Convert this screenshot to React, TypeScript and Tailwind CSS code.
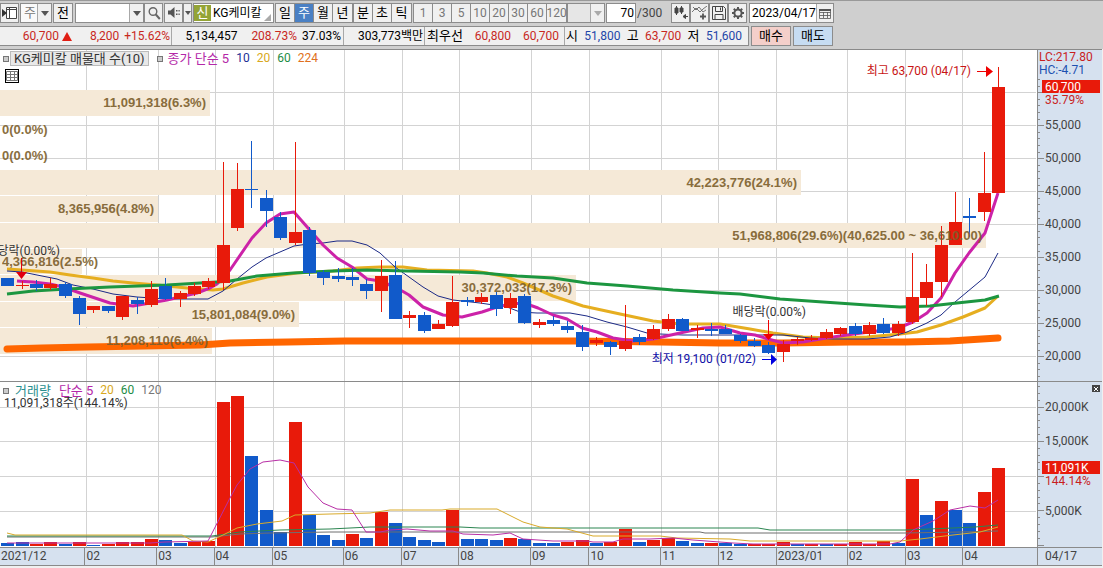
import React, { FC, ReactNode } from "react";

type Point = [number, number];
// high, body top, body bottom, low, rising
type Candle = [number, number, number, number, boolean];

const UP = "#e81a0a";
const DOWN = "#115aca";
const U = true;
const D = false;

const candles: Candle[] = [
  [278, 278, 286, 286, D], [281, 285, 286, 289, U], [280, 284, 288, 291, D], [278, 284, 288, 290, U],
  [282, 284, 296, 298, D], [296, 298, 314, 325, D], [306, 306, 310, 313, U], [306, 306, 311, 313, D],
  [296, 296, 317, 320, U], [297, 300, 304, 314, D], [281, 289, 305, 307, U], [278, 286, 299, 300, D],
  [291, 293, 299, 307, U], [283, 286, 294, 296, U], [278, 281, 287, 289, U], [162, 245, 283, 290, U],
  [163, 189, 228, 231, U], [141, 189, 190, 208, D], [190, 198, 211, 227, D], [212, 217, 238, 240, D],
  [142, 232, 243, 245, U], [227, 230, 273, 276, D], [270, 272, 278, 285, D], [268, 276, 279, 282, D],
  [268, 277, 280, 286, D], [279, 284, 291, 299, D], [260, 276, 291, 312, U], [261, 275, 319, 319, D],
  [311, 315, 318, 328, U], [312, 315, 331, 333, D], [320, 324, 329, 329, U], [276, 302, 326, 327, U],
  [297, 300, 302, 306, D], [293, 297, 302, 304, U], [292, 295, 309, 316, D], [293, 298, 308, 314, U],
  [294, 296, 323, 324, D], [319, 322, 325, 328, U], [316, 320, 324, 326, D], [321, 326, 330, 333, D],
  [325, 332, 347, 351, D], [337, 340, 343, 346, U], [341, 342, 347, 355, D], [305, 341, 349, 351, U],
  [334, 337, 342, 345, D], [325, 329, 339, 340, U], [314, 319, 329, 331, U], [318, 319, 331, 331, D],
  [325, 328, 330, 338, U], [323, 329, 331, 336, D], [325, 329, 334, 334, D], [334, 335, 341, 343, D],
  [338, 341, 346, 347, D], [342, 345, 353, 354, D], [340, 344, 352, 362, U], [337, 339, 341, 345, U],
  [335, 338, 340, 341, U], [329, 332, 338, 339, U], [327, 328, 334, 336, U], [323, 326, 334, 336, D],
  [322, 325, 334, 336, U], [318, 324, 333, 334, D], [321, 324, 333, 336, U], [253, 297, 322, 324, U],
  [264, 282, 298, 306, U], [226, 245, 282, 297, U], [192, 222, 245, 245, U], [198, 216, 218, 237, D],
  [152, 193, 212, 221, U], [67, 87, 193, 193, U],
];

const volumes: [number, boolean][] = [
  [543, D], [542, D], [544, U], [542, U], [544, D], [542, U], [545, D], [544, U], [542, U], [542, U],
  [539, U], [540, D], [543, D], [542, U], [541, U], [402, U], [396, U], [456, D], [510, D], [532, D],
  [422, U], [515, D], [535, D], [540, D], [534, U], [538, D], [512, U], [523, D], [537, D], [540, D],
  [542, D], [510, U], [539, D], [539, D], [540, D], [538, U], [539, D], [543, D], [543, D], [542, U],
  [540, U], [543, D], [542, U], [529, U], [542, D], [540, U], [538, U], [541, D], [543, D], [543, U],
  [543, D], [544, D], [544, U], [544, U], [542, U], [544, D], [544, U], [544, D], [544, U], [542, U],
  [544, U], [541, U], [543, D], [479, U], [515, D], [501, U], [510, D], [523, D], [492, U], [468, U],
];

const ma5: Point[] = [
  [17, 281], [33, 282], [50, 284], [63, 287], [80, 293], [95, 298], [110, 303], [133, 306], [150, 303],
  [167, 300], [180, 297], [197, 293], [210, 288], [217, 284], [230, 270], [252, 238], [266, 223],
  [280, 214], [294, 212], [308, 228], [323, 245], [337, 258], [352, 267], [367, 279], [380, 281],
  [397, 288], [409, 295], [423, 307], [443, 315], [462, 317], [482, 312], [497, 307], [510, 304],
  [524, 303], [538, 308], [553, 315], [567, 319], [582, 328], [597, 332], [613, 338], [633, 341],
  [653, 339], [680, 333], [703, 328], [720, 327], [740, 333], [755, 335], [768, 339], [783, 343],
  [803, 342], [826, 338], [854, 334], [877, 331], [898, 328], [913, 322], [927, 313], [941, 298],
  [955, 273], [969, 253], [985, 233], [998, 193],
];
const ma10: Point[] = [
  [7, 271], [22, 272], [37, 275], [57, 279], [73, 285], [93, 289], [113, 294], [137, 297], [167, 299],
  [208, 299], [223, 291], [237, 279], [252, 267], [266, 258], [280, 252], [294, 246], [308, 244],
  [323, 243], [337, 241], [352, 241], [367, 245], [380, 253], [395, 267], [409, 277], [423, 287],
  [438, 296], [453, 300], [480, 303], [507, 307], [520, 312], [537, 313], [570, 313], [587, 316],
  [607, 322], [627, 327], [647, 333], [660, 334], [683, 335], [783, 335], [810, 338], [833, 339],
  [867, 339], [890, 337], [907, 332], [927, 323], [941, 315], [955, 302], [985, 277], [998, 253],
];
const ma20: Point[] = [
  [7, 269], [22, 270], [50, 272], [70, 275], [93, 278], [113, 281], [133, 283], [157, 285], [187, 288],
  [213, 290], [223, 289], [243, 283], [267, 277], [297, 273], [333, 271], [357, 268], [380, 267],
  [403, 267], [427, 270], [473, 271], [487, 273], [507, 277], [523, 283], [553, 296], [583, 306],
  [620, 314], [653, 321], [680, 324], [720, 324], [750, 329], [773, 333], [803, 337], [833, 338],
  [867, 337], [900, 334], [917, 332], [941, 325], [963, 317], [985, 308], [998, 296],
];
const ma60: Point[] = [
  [7, 294], [33, 291], [67, 289], [110, 287], [167, 285], [217, 282], [230, 281], [257, 276], [293, 273],
  [333, 271], [367, 270], [407, 271], [460, 272], [483, 273], [517, 276], [553, 278], [587, 283],
  [627, 286], [673, 290], [720, 293], [740, 294], [780, 299], [823, 302], [867, 305], [900, 307],
  [930, 306], [957, 303], [985, 300], [999, 296],
];
const ma224: Point[] = [
  [7, 349], [42, 348], [88, 347], [200, 345], [230, 343], [288, 342], [345, 341], [575, 341], [660, 342],
  [720, 343], [783, 343], [850, 342], [905, 342], [950, 341], [998, 338],
];

const vol5: Point[] = [
  [7, 543], [150, 543], [165, 542], [208, 541], [230, 498], [237, 485], [250, 469], [263, 462], [280, 460],
  [294, 463], [308, 487], [323, 503], [337, 509], [352, 510], [366, 532], [380, 532], [390, 530],
  [407, 529], [430, 531], [453, 531], [463, 534], [493, 535], [510, 533], [523, 539], [553, 541],
  [587, 541], [593, 542], [613, 542], [623, 539], [650, 539], [673, 538], [693, 540], [733, 543],
  [753, 544], [890, 544], [900, 542], [913, 530], [933, 521], [950, 510], [970, 506], [985, 508], [998, 500],
];
const vol20: Point[] = [
  [7, 533], [15, 535], [182, 535], [193, 541], [208, 542], [223, 535], [237, 528], [257, 524], [282, 521],
  [295, 515], [330, 514], [370, 513], [390, 510], [442, 510], [450, 509], [497, 509], [523, 522],
  [540, 527], [567, 529], [593, 536], [660, 536], [677, 538], [730, 539], [750, 541], [900, 541],
  [920, 539], [953, 535], [980, 532], [998, 527],
];
const vol60: Point[] = [
  [7, 536], [212, 536], [240, 532], [280, 530], [330, 529], [370, 527], [460, 527], [480, 528], [758, 528],
  [770, 530], [905, 530], [930, 529], [975, 527], [998, 525],
];
const vol120: Point[] = [
  [7, 537], [212, 537], [240, 534], [270, 533], [330, 532], [700, 532], [705, 533], [905, 533], [960, 532], [998, 531],
];

// price bands: right edge, top, bottom
const bands = [
  [210, 90, 116], [801, 170, 195], [158, 196, 222], [986, 223, 248], [82, 249, 274],
  [576, 275, 301], [299, 302, 327], [212, 328, 354],
];

const bandLabels: { x: number; y: number; text: string; left?: boolean }[] = [
  { x: 206, y: 107, text: "11,091,318(6.3%)" },
  { x: 2, y: 134, text: "0(0.0%)", left: true },
  { x: 2, y: 160, text: "0(0.0%)", left: true },
  { x: 797, y: 187, text: "42,223,776(24.1%)" },
  { x: 154, y: 213, text: "8,365,956(4.8%)" },
  { x: 982, y: 240, text: "51,968,806(29.6%)(40,625.00 ~ 36,610.00)" },
  { x: 2, y: 266, text: "4,366,816(2.5%)", left: true },
  { x: 572, y: 292, text: "30,372,033(17.3%)" },
  { x: 295, y: 319, text: "15,801,084(9.0%)" },
  { x: 208, y: 345, text: "11,208,110(6.4%)" },
];

const months = [
  { label: "2021/12", start: 0 }, { label: "02", start: 86 }, { label: "03", start: 158 },
  { label: "04", start: 215 }, { label: "05", start: 273 }, { label: "06", start: 344 },
  { label: "07", start: 402 }, { label: "08", start: 459 }, { label: "09", start: 531 },
  { label: "10", start: 589 }, { label: "11", start: 661 }, { label: "12", start: 718 },
  { label: "2023/01", start: 776 }, { label: "02", start: 847 }, { label: "03", start: 905 },
  { label: "04", start: 962 },
];

const PLOT_WIDTH = 1037;
const priceGrid = [92, 125, 158, 191, 224, 257, 290, 323, 356];
const volumeGrid = [407, 441, 476, 511];

const centerX = (i: number) => Math.round(7.3 + i * 14.36);
const toPoints = (points: Point[]) => points.map((p) => p.join(",")).join(" ");

const Grid: FC<{ rows: number[]; top: number; bottom: number }> = ({ rows, top, bottom }) => (
  <g stroke="#d3d3d3" shapeRendering="crispEdges">
    {months.slice(1).map((m) => (
      <line key={m.start} x1={m.start + 0.5} x2={m.start + 0.5} y1={top} y2={bottom} />
    ))}
    {rows.map((y) => (
      <line key={y} x1={0} x2={PLOT_WIDTH - 1} y1={y + 0.5} y2={y + 0.5} />
    ))}
  </g>
);

const Line: FC<{ points: Point[]; color: string; width?: number }> = ({ points, color, width = 1 }) => (
  <polyline
    points={toPoints(points)}
    fill="none"
    stroke={color}
    strokeWidth={width}
    strokeLinejoin="round"
    strokeLinecap={width > 4 ? "round" : "butt"}
  />
);

const PricePlot = () => (
  <svg viewBox="0 50 1037 331" className="block h-auto w-full bg-white" role="img" aria-label="KG케미칼 주봉">
    <Grid rows={priceGrid} top={50} bottom={381} />
    {bands.map(([right, top, bottom]) => (
      <rect key={top} x={0} y={top} width={right} height={bottom - top} fill="#f5e9d7" />
    ))}
    <Line points={ma224} color="#ff6600" width={7} />
    <Line points={ma20} color="#e6ae20" width={3} />
    <Line points={ma10} color="#1c2a86" />
    <Line points={ma5} color="#cc22a8" width={3} />
    <Line points={ma60} color="#1c9640" width={3} />
    <g shapeRendering="crispEdges">
      {candles.map(([high, top, bottom, low, up], i) => {
        const x = centerX(i);
        return (
          <g key={i} fill={up ? UP : DOWN}>
            <rect x={x} y={high} width={1} height={low - high} />
            <rect x={x - 6} y={top} width={13} height={bottom - top} />
          </g>
        );
      })}
    </g>
    <g fill="#7d5f2c" fontSize={13} fontWeight={700} className="[font-family:'Liberation_Sans',sans-serif]">
      {bandLabels.map((l) => (
        <text key={l.y} x={l.x} y={l.y} textAnchor={l.left ? "start" : "end"} opacity={0.9}>
          {l.text}
        </text>
      ))}
    </g>
    <g fontSize={12}>
      <text x={971} y={75} textAnchor="end" fill="#c81414">최고 63,700 (04/17)</text>
      <path d="M977 71h9v-5l7 5.500-7 5.500v-5h-9z" fill="#f00000" />
      <text x={756} y={363} textAnchor="end" fill="#1010a8">최저 19,100 (01/02)</text>
      <path d="M762 359h9v-5l6 5.500-6 5.500v-5h-9z" fill="#0000e0" />
      <text x={806} y={316} textAnchor="end" fill="#333">배당락(0.00%)</text>
      <path d="M768 320h1v14h5l-5.500 6-5.500-6h5z" fill="#f00000" />
      <text x={60} y={255} textAnchor="end" fill="#333">당락(0.00%)</text>
      <path d="M21 258h1v14h5l-5.500 7-5.500-7h5z" fill="#e00010" />
    </g>
  </svg>
);

const VolumePlot = () => (
  <svg viewBox="0 382 1037 165" className="block h-auto w-full bg-white" role="img" aria-label="거래량">
    <Grid rows={volumeGrid} top={382} bottom={547} />
    <g shapeRendering="crispEdges">
      {volumes.map(([top, up], i) => (
        <rect key={i} x={centerX(i) - 6} y={top} width={13} height={546 - top} fill={up ? UP : DOWN} />
      ))}
    </g>
    <Line points={vol120} color="#6f6f6f" />
    <Line points={vol60} color="#2b8550" />
    <Line points={vol20} color="#d9aa2a" />
    <Line points={vol5} color="#b82fa6" />
  </svg>
);

const PriceAxis = () => (
  <svg viewBox="0 50 64 331" className="block h-full w-full" fontSize={12} fill="#444">
    <g stroke="#8a8a8a" shapeRendering="crispEdges">
      {Array.from({ length: 46 }, (_, i) => {
        const y = Math.round(376 - i * 6.6) + 0.5;
        return <line key={i} x1={0} x2={(i + 2) % 5 === 0 ? 6 : 2} y1={y} y2={y} />;
      })}
    </g>
    {priceGrid.slice(1).map((y, i) => (
      <text key={y} x={7} y={y + 4}>{`${55 - i * 5},000`}</text>
    ))}
    <text x={1} y={61} fill="#c81e1e">LC:217.80</text>
    <text x={1} y={74} fill="#1c50b0">HC:-4.71</text>
    <text x={7} y={104} fill="#c81e1e">35.79%</text>
    <rect x={4} y={80} width={58} height={13} fill={UP} />
    <text x={7} y={91} fill="#fff">60,700</text>
  </svg>
);

const VolumeAxis = () => (
  <svg viewBox="0 382 64 165" className="block h-full w-full" fontSize={12} fill="#444">
    <g stroke="#8a8a8a" shapeRendering="crispEdges">
      {Array.from({ length: 24 }, (_, i) => {
        const y = Math.round(545 - i * 6.92) + 0.5;
        return <line key={i} x1={0} x2={i % 5 === 0 ? 6 : 2} y1={y} y2={y} />;
      })}
    </g>
    <text x={7} y={411}>20,000K</text>
    <text x={7} y={445}>15,000K</text>
    <text x={7} y={515}>5,000K</text>
    <text x={7} y={485} fill="#c81e1e">144.14%</text>
    <rect x={4} y={461} width={58} height={13} fill={UP} />
    <text x={7} y={472} fill="#fff">11,091K</text>
  </svg>
);

const DateAxis = () => (
  <div className="flex h-[17px] leading-4 text-[#444]">
    {months.map((m, i) => {
      const end = months[i + 1]?.start ?? PLOT_WIDTH;
      return (
        <div
          key={m.start}
          className={i === 0 ? "min-w-0 basis-0 pl-px" : "min-w-0 basis-0 border-l border-[#8a8a8a] pl-px"}
          style={{ flexGrow: end - m.start }}
        >
          {m.label}
        </div>
      );
    })}
  </div>
);

const Arrow: FC<{ muted?: boolean }> = ({ muted }) => (
  <svg viewBox="0 0 8 5" className="h-[5px] w-2" fill={muted ? "#aaa" : "#555"}>
    <path d="M0 0h8l-4 5z" />
  </svg>
);

interface DropDownProps {
  label: string;
  value: string;
  className: string;
  muted?: boolean;
}

const DropDown: FC<DropDownProps> = ({ label, value, className, muted }) => (
  <div className={`relative flex border border-[#8c8c8c] ${className}`}>
    <select
      aria-label={label}
      disabled={muted}
      className="w-full appearance-none pl-[3px] text-[13px] leading-4 text-[#777] outline-none"
    >
      <option>{value}</option>
    </select>
    <span className="pointer-events-none absolute inset-y-0 right-0 flex w-[14px] items-center justify-center border-l border-[#a8a8a8] bg-[#f0f0f0]">
      <Arrow muted={muted} />
    </span>
  </div>
);

const IconButton: FC<{ label: string; className?: string; children: ReactNode }> = ({ label, className, children }) => (
  <button
    type="button"
    aria-label={label}
    className={`flex items-center justify-center border border-[#8c8c8c] bg-[#f0f0f0] ${className ?? "w-[19px]"}`}
  >
    {children}
  </button>
);

const ButtonGroup: FC<{ items: string[]; active?: string; muted?: boolean }> = ({ items, active, muted }) => (
  <div className="flex divide-x divide-[#8c8c8c] border border-[#8c8c8c]">
    {items.map((item) => (
      <button
        key={item}
        type="button"
        className={`flex w-[19px] items-center justify-center whitespace-nowrap ${
          item === active
            ? "bg-[#4a80c4] text-[13px] text-white"
            : muted
              ? "bg-[#f0f0f0] text-[#777]"
              : "bg-[#f0f0f0] text-[13px] text-black"
        }`}
      >
        {item}
      </button>
    ))}
  </div>
);

const Toolbar = () => (
  <div className="flex h-5 items-stretch">
    <IconButton label="패널 열기" className="w-[19px]">
      <svg viewBox="0 0 16 14" className="h-[14px] w-4">
        <path d="M4.500 1.500h10v11h-10zM7.500 1.500v11M4.500 3.500h10" fill="#fff" stroke="#444" />
        <path d="M0 3l5 4-5 4z" fill="#333" />
      </svg>
    </IconButton>
    <DropDown label="종목 구분" value="주" className="ml-px w-8 bg-[#fafafa]" />
    <button type="button" className="ml-px w-5 border border-[#8c8c8c] bg-[#f0f0f0] text-[13px] leading-4">전</button>
    <DropDown label="종목 검색" value="" className="ml-[2px] w-[69px] bg-white" />
    <IconButton label="검색">
      <svg viewBox="0 0 14 14" className="h-[14px] w-[14px]" fill="none" stroke="#666">
        <circle cx="6" cy="5.500" r="3.800" strokeWidth="1.400" />
        <path d="M8.800 8.500l4 4.500" strokeWidth="2" />
      </svg>
    </IconButton>
    <IconButton label="소리" className="ml-px w-[19px]">
      <svg viewBox="0 0 14 12" className="h-3 w-[14px]" fill="#555">
        <path d="M1 3.500h2.500L7.500 0v11l-4-3.500H1z" />
        <path d="M9 3h1.500v1.500H9zM9 6.500h1.500V8H9zM11.500 3h1.200v1.500h-1.200zM11.500 6.500h1.200V8h-1.200z" />
      </svg>
    </IconButton>
    <IconButton label="소리 메뉴" className="w-[9px]">
      <svg viewBox="0 0 6 4" className="h-1 w-[6px]" fill="#555"><path d="M0 0h6L3 4z" /></svg>
    </IconButton>
    <div className="relative ml-px flex w-[81px] items-center border border-[#8c8c8c] bg-white">
      <span className="flex h-4 w-[17px] items-center justify-center bg-[#94a436] text-[13px] text-white">신</span>
      <input aria-label="종목명" defaultValue="KG케미칼" className="w-[60px] pl-[2px] outline-none" />
      <svg viewBox="0 0 7 7" className="absolute right-[2px] bottom-px h-[7px] w-[7px]" fill="#aaa">
        <path d="M7 0v7H0z" />
      </svg>
    </div>
    <div className="ml-px flex">
      <ButtonGroup items={["일", "주", "월", "년"]} active="주" />
      <ButtonGroup items={["분", "초", "틱"]} />
    </div>
    <div className="ml-px flex">
      <ButtonGroup items={["1", "3", "5", "10", "20", "30", "60", "120"]} muted />
    </div>
    <DropDown label="틱 단위" value="" className="w-[38px] bg-[#e6e6e6]" muted />
    <label className="ml-px flex items-center">
      <input
        aria-label="표시 개수"
        defaultValue="70"
        className="h-full w-[30px] border border-[#8c8c8c] bg-white pr-px text-right outline-none"
      />
      <span className="w-[35px] pl-px text-[#444]">/300</span>
    </label>
    <IconButton label="차트 추가">
      <svg viewBox="0 0 16 14" className="h-[14px] w-4" fill="#444" stroke="#444">
        <path d="M3.500 0v9M8.500 0v8" />
        <path d="M2 2h3v5H2zM7 2h3v4H7z" />
        <path d="M15 10.500h-3.500M12.500 8.500l-2.500 2 2.500 2z" />
      </svg>
    </IconButton>
    <IconButton label="지표 추가">
      <svg viewBox="0 0 16 14" className="h-[14px] w-4" fill="none" stroke="#555">
        <path d="M0 6l4-4 4 4 3-3 4-3M1 1l3 3 3-3 4 5 3-2" strokeWidth=".8" />
        <path d="M8 10.500h6M11 7.500v6" strokeWidth="1.800" />
      </svg>
    </IconButton>
    <IconButton label="저장">
      <svg viewBox="0 0 14 14" className="h-[14px] w-[14px]" fill="none" stroke="#444">
        <path d="M.5.5h11l2 2v11H.5zM3.500.5v5h7v-5M3 13.500v-5h8v5M8.500 1.500v3" />
      </svg>
    </IconButton>
    <IconButton label="설정">
      <svg viewBox="0 0 14 14" className="h-[14px] w-[14px]" fill="none" stroke="#555">
        <circle cx="7" cy="7" r="3.600" strokeWidth="2" />
        <path
          d="M7 1v2M7 11v2M1 7h2M11 7h2M2.800 2.800l1.400 1.400M9.800 9.800l1.400 1.400M11.200 2.800L9.800 4.200M4.200 9.800l-1.400 1.400"
          strokeWidth="2"
        />
      </svg>
    </IconButton>
    <div className="ml-[2px] flex w-[85px] border border-[#8c8c8c] bg-white">
      <input aria-label="기준일" defaultValue="2023/04/17" className="w-[66px] pl-[2px] outline-none" />
      <button
        type="button"
        aria-label="달력"
        className="flex flex-1 items-center justify-center border-l border-[#a8a8a8] bg-[#f0f0f0]"
      >
        <svg viewBox="0 0 12 11" className="h-[11px] w-3" fill="none" stroke="#555">
          <path d="M.5 1.500h11v9H.5zM.5 4.500h11M.5 7.500h11M4.500 4v6M8.500 4v6" strokeWidth=".8" />
          <path d="M0 2h12" strokeWidth="2" />
        </svg>
      </button>
    </div>
  </div>
);

const RED = "text-[#c8281e]";
const BLUE = "text-[#1e46a8]";

const QuoteRow = () => (
  <div className="mt-[3px] flex h-5 leading-[18px]">
    <div className="flex w-[749px] divide-x divide-[#a8a8a8] border border-l-0 border-[#8c8c8c] bg-[#f0f0f0] text-black">
      <div className={`flex w-[172px] items-center justify-end pr-px ${RED}`}>
        <span>60,700</span>
        <svg viewBox="0 0 10 9" className="mr-[18px] ml-[3px] h-[9px] w-[10px]" fill="#e01e14">
          <path d="M5 0l5 9H0z" />
        </svg>
        <span>8,200</span>
        <span className="ml-[5px]">+15.62%</span>
      </div>
      <div className="flex w-[172px] justify-end pr-[2px]">
        <span>5,134,457</span>
        <span className={`ml-[14px] ${RED}`}>208.73%</span>
        <span className="ml-[5px]">37.03%</span>
      </div>
      <div className="w-[81px] pr-px text-right whitespace-nowrap">303,773백만</div>
      <div className="flex w-[140px] justify-between pr-[5px] pl-[2px]">
        <span className="text-[13px]">최우선</span>
        <span className={RED}>60,800</span>
        <span className={RED}>60,700</span>
      </div>
      <div className="flex flex-1 justify-between pr-[6px] pl-px">
        <span className="text-[13px]">시</span>
        <span className={BLUE}>51,800</span>
        <span className="text-[13px]">고</span>
        <span className={RED}>63,700</span>
        <span className="text-[13px]">저</span>
        <span className={BLUE}>51,600</span>
      </div>
    </div>
    <button type="button" className="ml-[2px] w-10 border border-[#8c8c8c] bg-[#f4cfca] text-[13px]">매수</button>
    <button type="button" className="ml-[2px] w-10 border border-[#8c8c8c] bg-[#c6dcf2] text-[13px]">매도</button>
  </div>
);

const Marker = () => <span className="h-[6px] w-[6px] border border-[#777] bg-[#ccc]" />;

const App: FC = () => {
  return (
    <main className="min-h-screen overflow-hidden bg-[#f0f0f0] text-[12px] [font-family:'Roboto','Noto_Sans_CJK_KR',sans-serif]">
      <header className="border-t border-[#999] bg-[#cfcfcf] pt-[2px] pb-[3px]">
        <Toolbar />
        <QuoteRow />
      </header>

      <div className="mr-px grid grid-cols-[minmax(0,1fr)_65px] border-y border-[#8a8a8a]">
        <section className="relative">
          <PricePlot />
          <div className="absolute top-px left-[3px] flex items-center leading-[13px]">
            <Marker />
            <button type="button" className="ml-px border border-[#bbb] bg-[#e8e8e8] px-[3px] text-[13px] text-[#333]">
              KG케미칼 매물대 수(10)
            </button>
            <span className="ml-2 flex"><Marker /></span>
            <div className="ml-[5px] flex items-center gap-[7px]">
              <span className="text-[13px] text-[#b428a8]">종가 단순 5</span>
              <span className="text-[#1c2f96]">10</span>
              <span className="text-[#d8a820]">20</span>
              <span className="text-[#1e8c46]">60</span>
              <span className="text-[#e07020]">224</span>
            </div>
          </div>
          <button type="button" aria-label="표 보기" className="absolute top-[19px] left-[5px] border border-black bg-white">
            <svg viewBox="0 0 12 12" className="h-3 w-3" fill="none" stroke="#777">
              <path d="M.5 1.500h11v9H.5zM.5 4.500h11M.5 7.500h11M4.500 1v9M8.500 1v9" />
            </svg>
          </button>
        </section>
        <aside className="border-l border-[#8a8a8a] bg-[#d6e1ef]">
          <PriceAxis />
        </aside>

        <section className="relative border-t border-[#8a8a8a]">
          <VolumePlot />
          <div className="absolute top-[2px] left-[3px] leading-[13px]">
            <div className="flex items-center">
              <Marker />
              <span className="ml-[6px] text-[13px] text-[#2a8f8f]">거래량</span>
              <span className="ml-2 text-[13px] text-[#b428a8]">단순 5</span>
              <span className="ml-[7px] text-[#d8a820]">20</span>
              <span className="ml-[7px] text-[#1e8c46]">60</span>
              <span className="ml-[7px] text-[#777]">120</span>
            </div>
            <p className="pl-px text-[#333]">11,091,318주(144.14%)</p>
          </div>
        </section>
        <aside className="relative border-t border-l border-[#8a8a8a] bg-[#d6e1ef]">
          <VolumeAxis />
          <button
            type="button"
            aria-label="닫기"
            className="absolute top-[3px] right-[2px] flex h-[7px] w-2 items-center justify-center bg-[#444]"
          >
            <svg viewBox="0 0 4 4" className="h-1 w-1" stroke="#fff"><path d="M0 0l4 4M4 0L0 4" /></svg>
          </button>
        </aside>

        <div className="border-t border-[#8a8a8a] bg-[#d6e1ef]">
          <DateAxis />
        </div>
        <div className="border-t border-l border-[#8a8a8a] bg-[#d6e1ef] pl-[7px] leading-4 text-[#444]">04/17</div>
      </div>
    </main>
  );
};

export default App;
